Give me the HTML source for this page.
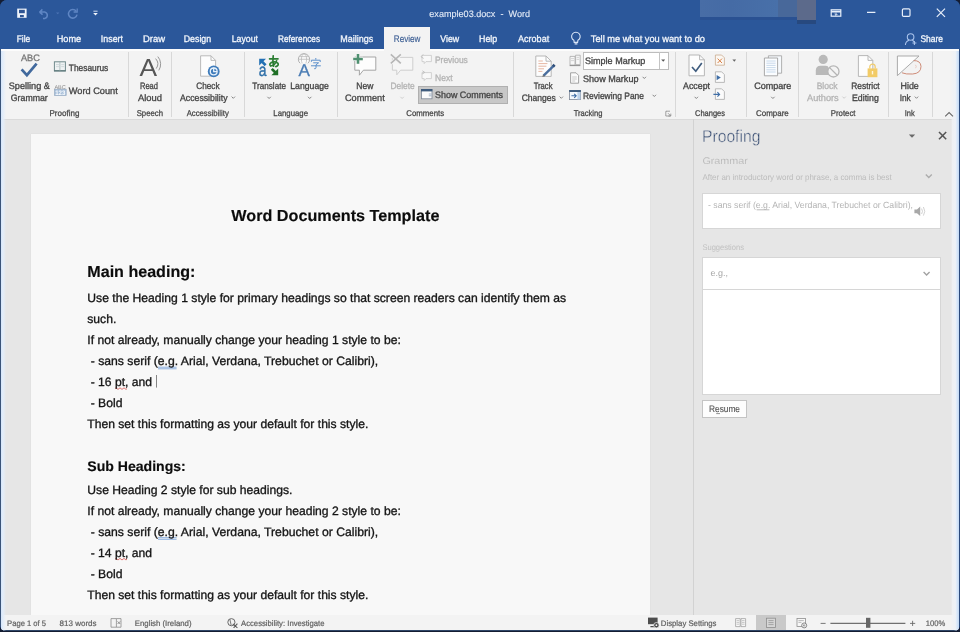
<!DOCTYPE html>
<html><head><meta charset="utf-8"><title>Word</title>
<style>
html,body{margin:0;padding:0;}
body{width:960px;height:632px;overflow:hidden;background:#141d33;font-family:"Liberation Sans",sans-serif;position:relative;}
#win{position:absolute;left:0;top:0;width:960px;height:632px;overflow:hidden;}
#frame{position:absolute;left:0;top:0;width:960px;height:631px;border-radius:7px 7px 6px 6px;background:#2b579a;overflow:hidden;filter:blur(0.45px);}
.abs{position:absolute;}
.t{position:absolute;white-space:pre;line-height:1;transform-origin:0 0;}
.d{color:#1a1a1a;}
.sep{position:absolute;top:52px;height:65px;width:1px;background:#d8d8d8;}
svg{position:absolute;overflow:visible;}
svg text{white-space:pre;}
</style></head><body>
<div id="win"><div id="frame">
<!-- title + tab strip -->
<div class="abs" style="left:0;top:0;width:960px;height:49px;background:#2b579a"></div>
<div class="abs" style="left:700px;top:0;width:116px;height:20px;background:#2a5192"></div>
<div class="abs" style="left:797px;top:0;width:19px;height:23.5px;background:#27497f"></div>
<div class="abs" style="left:700px;top:0;width:78px;height:17px;background:linear-gradient(90deg,#486da6,#456ba5 40%,#4870a9)"></div>
<div class="abs" style="left:778px;top:0;width:19px;height:17px;background:#48689a"></div>
<div class="abs" style="left:797px;top:0;width:19px;height:20px;background:#5c6a8b"></div>

<div class="abs" style="left:384px;top:27px;width:46px;height:23px;background:#f3f3f3"></div>
<!-- ribbon -->
<div class="abs" style="left:1px;top:49px;width:958px;height:71px;background:#f3f3f3"></div>
<div class="abs" style="left:1px;top:119px;width:958px;height:1px;background:#dadada"></div>
<!-- doc area -->
<div class="abs" style="left:1px;top:120px;width:958px;height:495px;background:#e6e6e6"></div>
<div class="abs" style="left:31px;top:134.2px;width:619px;height:481px;background:#f8f8f8;box-shadow:0 0 1px #cfcfcf"></div>
<!-- side panel -->
<div class="abs" style="left:693px;top:119px;width:1px;height:496px;background:#d2d2d2"></div>
<div class="abs" style="left:702px;top:193px;width:239px;height:36px;background:#fff;box-sizing:border-box;border:1px solid #d6d6d6"></div>
<div class="abs" style="left:702px;top:257px;width:239px;height:138px;background:#fff;box-sizing:border-box;border:1px solid #d6d6d6"></div>
<div class="abs" style="left:702px;top:289px;width:239px;height:1px;background:#d6d6d6"></div>
<div class="abs" style="left:701.5px;top:399.5px;width:45px;height:18.5px;background:#fdfdfd;box-sizing:border-box;border:1px solid #c4c4c4"></div>
<!-- status bar -->
<div class="abs" style="left:1px;top:615px;width:958px;height:16px;background:#f3f3f3"></div>
<div class="abs" style="left:756px;top:615px;width:30px;height:16px;background:#c9c9c9"></div>
<!-- window edge glow -->
<div class="abs" style="left:0;top:49px;width:1.2px;height:583px;background:#3a5479"></div>
<div class="abs" style="left:1.2px;top:49px;width:5px;height:582px;background:linear-gradient(90deg,#d6e6fb 0,#e4eefa 40%,rgba(240,243,247,0) 100%)"></div>
<div class="abs" style="left:950.6px;top:49px;width:8.2px;height:582px;background:linear-gradient(90deg,rgba(240,242,245,0) 0,rgba(240,242,245,.85) 18%,#eef2f7 55%,#d9e8fa 75%,#c3d9f4 100%)"></div>
<div class="abs" style="left:958.7px;top:49px;width:1.3px;height:583px;background:#2b4a7c"></div>
<div class="abs" style="left:0;top:629.6px;width:960px;height:2px;background:#2f4668"></div>
<div class="abs" style="left:1px;top:49px;width:383px;height:1.6px;background:#fcfcfc"></div><div class="abs" style="left:430px;top:49px;width:529px;height:1.6px;background:#fcfcfc"></div>
<!-- ribbon details -->
<div class="sep" style="left:128px"></div><div class="sep" style="left:171px"></div><div class="sep" style="left:244px"></div>
<div class="sep" style="left:336.5px"></div><div class="sep" style="left:513px"></div><div class="sep" style="left:675px"></div>
<div class="sep" style="left:746px"></div><div class="sep" style="left:798px"></div><div class="sep" style="left:887.5px"></div><div class="sep" style="left:931.5px"></div>
<div class="abs" style="left:418px;top:86px;width:90px;height:17.6px;background:#c8c8c8;box-sizing:border-box;border:1px solid #b0b0b0"></div>
<div class="abs" style="left:582.5px;top:51.5px;width:86px;height:18px;background:#fff;box-sizing:border-box;border:1px solid #bdbdbd"></div>
<div class="abs" style="left:658.5px;top:52px;width:1px;height:17px;background:#c4c4c4"></div>
<svg style="left:0;top:0" width="960" height="632" viewBox="0 0 960 632" fill="none" stroke-linecap="butt">
<!-- ===== Quick access toolbar ===== -->
<g id="qat">
 <rect x="17.2" y="8.6" width="9.4" height="9.2" fill="#eef3fb"/>
 <rect x="19" y="9.8" width="5.8" height="3.4" fill="#2f5593"/>
 <rect x="20" y="15" width="3.8" height="2.2" fill="#2f5593"/>
 <path d="M39.5 12.2 L42.4 9.4 M39.5 12.2 L42.6 14.6 M39.8 12.1 H45 A3.3 3.3 0 0 1 45 18.4 H43" stroke="#5f86c4" stroke-width="1.5"/>
 <path d="M56 12.4 h3.4 l-1.7 1.8z" fill="#4c74b4"/>
 <path d="M76.2 11.2 A4.3 4.3 0 1 0 77 14.6" stroke="#5f86c4" stroke-width="1.5"/>
 <path d="M77.2 8.4 V12 H73.6" stroke="#5f86c4" stroke-width="1.3"/>
 <path d="M93.4 11.2 h4.2" stroke="#dfe8f6" stroke-width="0.9"/>
 <path d="M93.2 12.9 h4.6 l-2.3 2.6z" fill="#f2f6fc"/>
</g>
<!-- ===== window controls ===== -->
<g stroke="#e8effa" stroke-width="1.2">
 <rect x="831.2" y="9.8" width="9.6" height="6.4" />
 <path d="M831.2 11.6 h9.6" stroke-width="1.6"/>
 <path d="M836 12.6 v2.6 M834.6 14 l1.4 1.4 1.4-1.4" stroke-width="0.9"/>
 <path d="M867 12.4 h8.4"/>
 <rect x="902.4" y="8.8" width="7.6" height="7.6" rx="1.2"/>
 <path d="M936.8 8.6 l8.2 8.2 M945 8.6 l-8.2 8.2"/>
</g>
<!-- lightbulb -->
<g stroke="#d9e5f7" stroke-width="1.1">
 <path d="M573.9 40.3 A4.3 4.3 0 1 1 577.9 40.3 L577.6 42.4 H574.2 Z"/>
 <path d="M574.6 43.8 h2.8" stroke-width="1.3"/>
</g>
<!-- share icon -->
<g stroke="#a9c3ec" stroke-width="1.1">
 <circle cx="910.6" cy="37" r="3.3"/>
 <path d="M905.4 45 A5.4 5.4 0 0 1 909 40.2 M912.3 40.2 Q913.5 40.8 914.2 42"/>
 <path d="M912.4 43 h4 M914.4 41 v4"/>
</g>

<!-- ===== Proofing group ===== -->
<path d="M21.6 69.4 L26.9 75.2 L36.6 63.6" stroke="#41699d" stroke-width="2.7" stroke-linejoin="miter"/>
<!-- thesaurus -->
<g>
 <rect x="54.4" y="61.8" width="11" height="9" fill="#eef2f3" stroke="#708a8c" stroke-width="1"/>
 <path d="M54 70.9 h11.8" stroke="#5d787a" stroke-width="1.3"/>
 <path d="M59.9 62 v8.6" stroke="#9fb2b4" stroke-width="0.8"/>
 <path d="M56 64.6 h3 M56 66.6 h3 M61.2 64.6 h3 M61.2 66.6 h3" stroke="#c3cfd0" stroke-width="0.7"/>
</g>
<!-- word count -->
<g>
 <text x="54.4" y="88.8" font-family="Liberation Sans" font-size="5.6" fill="#8e8e8e" textLength="11.4" lengthAdjust="spacingAndGlyphs" text-rendering="geometricPrecision">ABC</text>
 <rect x="54.4" y="89.2" width="11.8" height="6.4" fill="#a9c0da" stroke="#93a7bf" stroke-width="0.6"/>
 <text x="55.2" y="95.2" font-family="Liberation Sans" font-size="6.4" font-weight="bold" fill="#f6f9fd" textLength="10.2" lengthAdjust="spacingAndGlyphs" text-rendering="geometricPrecision">123</text>
</g>
<!-- ===== Read aloud ===== -->
<text x="139.6" y="76.3" font-family="Liberation Sans" font-size="24.8" fill="#565656" textLength="17.6" lengthAdjust="spacingAndGlyphs">A</text>
<path d="M155.6 58.6 A8 8 0 0 1 156.2 68.6 M157.8 56.6 A11.5 11.5 0 0 1 158.8 70.4" stroke="#8c8c8c" stroke-width="0.9"/>
<!-- ===== Check accessibility ===== -->
<path d="M200.6 55.8 H211 L215.6 60.4 V76.2 H200.6 Z" fill="#fdfdfd" stroke="#b3b3b3" stroke-width="0.9"/>
<path d="M211 55.8 V60.4 H215.6" stroke="#b3b3b3" stroke-width="0.9"/>
<circle cx="213.7" cy="71.4" r="5.9" fill="#3f7cbb"/>
<circle cx="213.7" cy="71.4" r="3.4" stroke="#e6f0fa" stroke-width="1.3"/>
<path d="M213.7 67.6 V71.6 H217.2" stroke="#e6f0fa" stroke-width="1.3"/>
<!-- ===== Translate ===== -->
<g>
 <path d="M259.2 58.8 H266 L259.2 65.6 Z" fill="#2270b4"/>
 <path d="M262 61.6 L265.6 65.2" stroke="#2270b4" stroke-width="2.7"/>
 <text x="258.8" y="75.9" font-family="Liberation Sans" font-size="17.6" fill="#2e6fa8" stroke="#2e6fa8" stroke-width="0.35" textLength="7.8" lengthAdjust="spacingAndGlyphs" text-rendering="geometricPrecision">a</text>
 <g stroke="#2b7d32" stroke-width="1.7" stroke-linecap="round">
  <path d="M269.6 58.8 h8.4"/>
  <path d="M273.2 55.8 Q272.4 61 273.6 66.2"/>
  <path d="M276.6 60.8 Q275 65.6 270.6 66 Q268.8 64.2 271.2 62.6 Q275.4 60.8 278 63.4 Q279 65.6 275.8 66.6"/>
 </g>
 <path d="M278.2 75.3 H271.4 L278.2 68.5 Z" fill="#1f7026"/>
 <path d="M275.4 72.5 L271.8 68.9" stroke="#1f7026" stroke-width="2.7"/>
</g>
<!-- ===== Language ===== -->
<g>
 <circle cx="304" cy="59.3" r="5.6" fill="#fafafa" stroke="#a2a2a2" stroke-width="0.85"/>
 <path d="M298.6 59.3 h10.8 M299.6 56.6 h8.8" stroke="#b4b4b4" stroke-width="0.7"/>
 <ellipse cx="304" cy="59.3" rx="2.6" ry="5.6" stroke="#b4b4b4" stroke-width="0.7"/>
 <rect x="298" y="63.2" width="13" height="2.6" fill="#f3f3f3"/>
 <text x="298.6" y="76.2" font-family="Liberation Sans" font-size="17" fill="#4a7cb4" stroke="#4a7cb4" stroke-width="0.3" textLength="11.4" lengthAdjust="spacingAndGlyphs" text-rendering="geometricPrecision">A</text>
 <g stroke="#5b8fcb" stroke-width="1">
  <path d="M315.8 58 v1.6 M311.4 61.8 v-1.6 h8.8 v1.8"/>
  <path d="M313.2 62.8 h5.4 l-2.6 2 M311 65.8 h9.8 M316 64.8 v3 q0 1.2 -1.8 0.9"/>
 </g>
</g>
<!-- ===== Comments ===== -->
<g>
 <path d="M354.8 57 H375.8 V70.2 H363.4 L359.4 75.2 V70.2 H354.8 Z" fill="#fdfdfd" stroke="#9c9c9c" stroke-width="0.9"/>
 <path d="M353 58.9 h10 M358 53.9 v10" stroke="#f3f3f3" stroke-width="4.2"/>
 <path d="M353.2 58.9 h9.6 M358 54.1 v9.6" stroke="#4f9070" stroke-width="2.5"/>
 <!-- delete -->
 <path d="M392.4 57.4 H412.8 V70.2 H400.6 L396.8 74.8 V70.2 H392.4 Z" fill="#f6f6f6" stroke="#cbcbcb" stroke-width="0.9"/>
 <path d="M390.8 54.4 l10 9 M400.8 54.4 l-10 9" stroke="#f3f3f3" stroke-width="3.4"/>
 <path d="M390.8 54.4 l10 9 M400.8 54.4 l-10 9" stroke="#b5b5b5" stroke-width="1.5"/>
 <!-- previous / next -->
 <path d="M422 55.4 H431.4 V61.6 H426 L424.2 63.6 V61.6 H422 Z" fill="#f8f8f8" stroke="#c8c8c8" stroke-width="0.8"/>
 <path d="M421 56.8 l2.2 -2.4 M421 56.8 l2.6 1.6" stroke="#bdbdbd" stroke-width="0.9"/>
 <path d="M422 72.6 H431.4 V78.6 H426 L424.2 80.6 V78.6 H422 Z" fill="#f8f8f8" stroke="#c8c8c8" stroke-width="0.8"/>
 <path d="M424.8 72.4 l-2.4 -1.6 M424.8 72.4 l-2.6 1.6" stroke="#bdbdbd" stroke-width="0.9"/>
 <!-- show comments icon -->
 <rect x="421.4" y="89.4" width="10.6" height="9.4" fill="#fbfbfb" stroke="#7d8896" stroke-width="0.8"/>
 <rect x="421" y="89" width="11.4" height="2.4" fill="#3f5c7e"/>
 <path d="M428.8 94 h2.8 M428.8 95.8 h2.8" stroke="#8fa3bb" stroke-width="0.8"/>
</g>
<!-- ===== Tracking ===== -->
<g>
 <path d="M535.8 56 H546 L551.2 61.2 V76.4 H535.8 Z" fill="#fdfdfd" stroke="#b0b0b0" stroke-width="0.9"/>
 <path d="M546 56 V61.2 H551.2" stroke="#b0b0b0" stroke-width="0.9"/>
 <path d="M538.4 61 h4.4 M538.4 63.6 h9 M538.4 66.2 h8 M538.4 68.8 h5.6 M538.4 71.4 h4" stroke="#e0a58c" stroke-width="0.8"/>
 <path d="M543.6 75.6 L553.6 65.8" stroke="#4a6e9e" stroke-width="2.4"/>
 <path d="M542.4 76.9 l0.6 -2.4 1.8 1.8z" fill="#6b6b6b"/>
 <path d="M553 66.4 l1.6 -1.6" stroke="#2f4f7a" stroke-width="2.8"/>
 <!-- display for review -->
 <path d="M570 56.4 h5 v8.6 h-5z M575.6 55.2 h4.6 v9.4 h-4.6z" fill="#f8f8f8" stroke="#a9a9a9" stroke-width="0.8"/>
 <path d="M569.6 65.6 h10.8" stroke="#8f8f8f" stroke-width="1"/>
 <path d="M576.6 57.4 h2.6 M576.6 59.4 h2.6 M571 58.6 h3 M571 60.6 h3" stroke="#c4c4c4" stroke-width="0.7"/>
 <!-- show markup -->
 <path d="M570.6 72.8 H576 L578.6 75.4 V83.2 H570.6 Z" fill="#fbfbfb" stroke="#929292" stroke-width="0.85"/>
 <path d="M572.2 77 h4.6 M572.2 79 h4.6 M572.2 81 h3" stroke="#b4b4b4" stroke-width="0.7"/>
 <!-- reviewing pane -->
 <rect x="569.6" y="90.4" width="10.8" height="9.2" fill="#f4f8fc" stroke="#7d8896" stroke-width="0.8"/>
 <rect x="569.2" y="90" width="11.6" height="2" fill="#3f5c7e"/>
 <rect x="577.4" y="92" width="3" height="7.4" fill="#bcd2ea"/>
 <path d="M571.4 95.8 h4.6 M574.2 93.8 l2 2 -2 2" stroke="#3f6ea6" stroke-width="1.1"/>
 <!-- dialog launcher -->
 <path d="M666.4 111.4 h-0.6 v4.6 h4.6 M668 113.2 l2.6 2.6 M670.8 113.6 v2.4 h-2.4" stroke="#8a8a8a" stroke-width="0.8"/>
 <path d="M666 111.2 h4" stroke="#8a8a8a" stroke-width="0.8"/>
</g>
<!-- ===== Changes ===== -->
<g>
 <path d="M689 55 H699.6 L704.4 59.8 V75.8 H689 Z" fill="#fdfdfd" stroke="#b0b0b0" stroke-width="0.9"/>
 <path d="M699.6 55 V59.8 H704.4" stroke="#b0b0b0" stroke-width="0.9"/>
 <path d="M692 67 L695.8 71.2 L701.8 63" stroke="#3f5c7e" stroke-width="1.7"/>
 <!-- reject -->
 <path d="M715.4 55 H721.6 L724.4 57.8 V65.2 H715.4 Z" fill="#fbf7f2" stroke="#c9ab8f" stroke-width="0.8"/>
 <path d="M717.6 58.6 l4.4 4.4 M722 58.6 l-4.4 4.4" stroke="#d9824a" stroke-width="1"/>
 <!-- previous change -->
 <path d="M715.4 71.8 H721.6 L724.4 74.6 V82.4 H715.4 Z" fill="#fbfbfb" stroke="#a9a9a9" stroke-width="0.8"/>
 <path d="M716.6 75 l4.2 2.6 -4.2 2.6z" fill="#3f6ea6"/>
 <!-- next change -->
 <path d="M715.4 88.8 H721.6 L724.4 91.6 V99.4 H715.4 Z" fill="#fbfbfb" stroke="#a9a9a9" stroke-width="0.8"/>
 <path d="M713.4 94.4 h6 M717.4 92.2 l2.2 2.2 -2.2 2.2" stroke="#3f6ea6" stroke-width="1.1"/>
</g>
<!-- ===== Compare ===== -->
<g>
 <path d="M768.4 55.8 H781.6 V73.2 H768.4 Z" fill="#f6f9fc" stroke="#a9a9a9" stroke-width="0.9"/>
 <path d="M764.4 58 H777.6 V75.8 H764.4 Z" fill="#fbfdff" stroke="#a0a0a0" stroke-width="0.9"/>
 <path d="M766.4 61 h9.2 M766.4 63.2 h9.2 M766.4 65.4 h9.2 M766.4 67.6 h9.2 M766.4 69.8 h9.2 M766.4 72 h9.2" stroke="#bcd0e6" stroke-width="0.8"/>
</g>
<!-- ===== Protect ===== -->
<g>
 <circle cx="823.2" cy="59.4" r="4.6" fill="#b9b9b9"/>
 <path d="M815.8 75 V70.6 Q815.8 65.8 820.6 65.8 H825.8 Q828.4 65.8 828.6 68 V75 Z" fill="#b9b9b9"/>
 <circle cx="833.4" cy="71.4" r="5.6" fill="#f3f3f3" stroke="#b5b5b5" stroke-width="1.3"/>
 <path d="M829.6 67.6 l7.6 7.6" stroke="#b5b5b5" stroke-width="1.3"/>
 <!-- restrict editing -->
 <path d="M858.4 55.6 H868 L872.8 60.4 V76.4 H858.4 Z" fill="#fdfdfd" stroke="#b0b0b0" stroke-width="0.9"/>
 <path d="M868 55.6 V60.4 H872.8" stroke="#b0b0b0" stroke-width="0.9"/>
 <path d="M869.8 68.6 V66.8 A2.7 2.7 0 0 1 875.2 66.8 V68.6" stroke="#f0cd72" stroke-width="1.3"/>
 <rect x="867.6" y="68.4" width="9.8" height="8.8" fill="#f2cb66"/>
 <rect x="871.8" y="71" width="1.4" height="3.4" fill="#fff6dc"/>
</g>
<!-- ===== Ink ===== -->
<g>
 <path d="M897.4 56 H919 L897.4 75.6 Z" fill="#fdfdfd" stroke="#a2a2a2" stroke-width="0.9"/>
 <path d="M913.6 60.6 Q920.6 60.4 921 66.4 Q921 73.4 912.6 74 Q905.6 74.4 902 72.8" stroke="#c9806a" stroke-width="0.9"/>
 <path d="M915.4 64.8 q1.6 1.4 0.2 3.4" stroke="#e7c2b6" stroke-width="0.8"/>
</g>
<path d="M945.2 116.4 l3.9 -3.9 3.9 3.9" stroke="#6a6a6a" stroke-width="1.1"/>

<!-- dropdown arrows (ribbon) -->
<g stroke="#7a7a7a" stroke-width="0.9">
 <path d="M231.6 96.6 l1.7 1.7 1.7-1.7"/>
 <path d="M267.4 96.8 l1.7 1.7 1.7-1.7"/>
 <path d="M308 96.8 l1.7 1.7 1.7-1.7"/>
 <path d="M559.6 96.6 l1.7 1.7 1.7-1.7"/>
 <path d="M642.6 76.8 l1.7 1.7 1.7-1.7"/>
 <path d="M652.6 94.8 l1.7 1.7 1.7-1.7"/>
 <path d="M694.6 96.8 l1.7 1.7 1.7-1.7"/>
 <path d="M771.2 96.8 l1.7 1.7 1.7-1.7"/>
 <path d="M914.8 96.6 l1.7 1.7 1.7-1.7"/>
 <path d="M400.4 96.8 l1.7 1.7 1.7-1.7" stroke="#c9c9c9"/>
 <path d="M842.4 96.6 l1.7 1.7 1.7-1.7" stroke="#c9c9c9"/>
</g>
<path d="M661.2 59.6 h4 l-2 2.2z" fill="#555"/>
<path d="M732.4 59.6 h3.8 l-1.9 2.1z" fill="#666"/>

<!-- ===== Side panel icons ===== -->
<path d="M908.8 134.4 h6.4 l-3.2 3.4z" fill="#6a6a6a"/>
<path d="M939 132 l7.2 7.2 M946.2 132 l-7.2 7.2" stroke="#555" stroke-width="1.55"/>
<path d="M756.6 209.8 h12.8" stroke="#a8a8a8" stroke-width="0.8"/>
<path d="M925.8 174.6 l3 3 3-3" stroke="#adadad" stroke-width="1.4"/>
<path d="M923.6 272 l3 3 3-3" stroke="#a2a2a2" stroke-width="1.4"/>
<g>
 <path d="M914.4 209.4 h2.6 l3.2 -2.8 v9.4 l-3.2 -2.8 h-2.6z" fill="#a8a8a8"/>
 <path d="M921.6 208.6 q1.8 2.7 0 5.4 M923.4 207 q2.8 4.3 0 8.6" stroke="#c6c6c6" stroke-width="0.8"/>
</g>
<path d="M716.2 413.6 h3.8" stroke="#666" stroke-width="0.7"/>
<!-- ===== Status bar icons ===== -->
<g stroke="#8a8a8a" stroke-width="0.8">
 <path d="M111 618.6 h5.4 v8.6 h-5.4z"/>
 <path d="M116.4 618.6 h4.6 v8.6 h-4.6"/>
 <path d="M117.6 621.4 l2.6 2.6 M120.2 621.4 l-2.6 2.6" stroke="#7a7a7a"/>
</g>
<g>
 <circle cx="231.4" cy="622.2" r="3.6" stroke="#6a6a6a" stroke-width="1"/>
 <path d="M229.8 619.2 l1.4 6" stroke="#6a6a6a" stroke-width="0.9"/>
 <path d="M232.8 623.8 l4.6 4 M237.4 623.6 l-3.8 4.2" stroke="#5a5a5a" stroke-width="1.1"/>
</g>
<g>
 <rect x="648" y="617.6" width="9.6" height="6.6" fill="#4d4d4d"/>
 <path d="M650.4 626.6 h4.4" stroke="#4d4d4d" stroke-width="1.2"/>
 <circle cx="656.4" cy="625.2" r="2.7" fill="#4d4d4d" stroke="#f3f3f3" stroke-width="0.7"/>
 <circle cx="656.4" cy="625.2" r="0.9" fill="#f3f3f3"/>
</g>
<g stroke="#a2a2a2" stroke-width="0.8">
 <path d="M735.6 618.6 h4.6 v8 h-4.6z M741 618.6 h4.6 v8 h-4.6z" fill="#f8f8f8"/>
 <path d="M736.6 620.6 h2.6 M736.6 622.4 h2.6 M736.6 624.2 h2.6 M742 620.6 h2.6 M742 622.4 h2.6 M742 624.2 h2.6" stroke-width="0.6"/>
</g>
<g stroke="#8e8e8e" stroke-width="0.8">
 <rect x="766.6" y="618.2" width="8.8" height="9.2" fill="#d6d6d6"/>
 <path d="M768.4 620.6 h5.2 M768.4 622.6 h5.2 M768.4 624.6 h5.2" stroke-width="0.7"/>
</g>
<g stroke="#8e8e8e" stroke-width="0.8">
 <rect x="797" y="618.4" width="8.4" height="8" fill="#f8f8f8"/>
 <path d="M798.4 620.6 h5.4 M798.4 622.4 h3" stroke-width="0.6"/>
 <circle cx="804.2" cy="625.4" r="2.5" fill="#f3f3f3" stroke="#6e6e6e"/>
 <path d="M803 625.4 h2.4 M804.2 624 q-1 1.4 0 2.8" stroke="#6e6e6e" stroke-width="0.5"/>
</g>
<path d="M820.6 623.4 h5" stroke="#6a6a6a" stroke-width="0.9"/>
<path d="M830.4 623.4 h75" stroke="#707070" stroke-width="1.1"/>
<rect x="866" y="617.8" width="4.4" height="10" fill="#666"/>
<path d="M910 623.4 h5.2 M912.6 620.8 v5.2" stroke="#6a6a6a" stroke-width="0.9"/>

<!-- ===== Document decorations ===== -->
<!-- grammar double underline under e.g. -->
<g stroke="#5b8fd6" stroke-width="0.7">
 <path d="M158 367.2 h18.6 M158 368.8 h18.6"/>
 <path d="M158 537.7 h18.6 M158 539.3 h18.6"/>
</g>
<!-- red squiggle under pt -->
<g stroke="#d9534f" stroke-width="0.8">
 <path d="M115 388.6 q1 -1.6 2 0 t2 0 t2 0 t2 0 t2 0 t2 0"/>
 <path d="M115 559.2 q1 -1.6 2 0 t2 0 t2 0 t2 0 t2 0 t2 0"/>
</g>
<!-- text caret -->
<path d="M156.5 375 v12.6" stroke="#777" stroke-width="0.9"/>
</svg>

<svg style="left:0;top:0" width="960" height="632" viewBox="0 0 960 632" text-rendering="geometricPrecision" font-family="Liberation Sans, sans-serif" xml:space="preserve">
<text x="429.3" y="17" font-size="9.4" fill="#e6edf8" textLength="100.7" lengthAdjust="spacingAndGlyphs" stroke="#e6edf8" stroke-width="0.1">example03.docx  -  Word</text>
<text x="16.7" y="42" font-size="9.6" fill="#f1f5fb" textLength="13.6" lengthAdjust="spacingAndGlyphs" stroke="#f1f5fb" stroke-width="0.32">File</text>
<text x="56.7" y="42" font-size="9.6" fill="#f1f5fb" textLength="24.5" lengthAdjust="spacingAndGlyphs" stroke="#f1f5fb" stroke-width="0.32">Home</text>
<text x="100.8" y="42" font-size="9.6" fill="#f1f5fb" textLength="22.2" lengthAdjust="spacingAndGlyphs" stroke="#f1f5fb" stroke-width="0.32">Insert</text>
<text x="143.0" y="42" font-size="9.6" fill="#f1f5fb" textLength="22.0" lengthAdjust="spacingAndGlyphs" stroke="#f1f5fb" stroke-width="0.32">Draw</text>
<text x="183.7" y="42" font-size="9.6" fill="#f1f5fb" textLength="27.5" lengthAdjust="spacingAndGlyphs" stroke="#f1f5fb" stroke-width="0.32">Design</text>
<text x="231.7" y="42" font-size="9.6" fill="#f1f5fb" textLength="26.3" lengthAdjust="spacingAndGlyphs" stroke="#f1f5fb" stroke-width="0.32">Layout</text>
<text x="278.0" y="42" font-size="9.6" fill="#f1f5fb" textLength="42.0" lengthAdjust="spacingAndGlyphs" stroke="#f1f5fb" stroke-width="0.32">References</text>
<text x="340.3" y="42" font-size="9.6" fill="#f1f5fb" textLength="33.0" lengthAdjust="spacingAndGlyphs" stroke="#f1f5fb" stroke-width="0.32">Mailings</text>
<text x="440.3" y="42" font-size="9.6" fill="#f1f5fb" textLength="18.9" lengthAdjust="spacingAndGlyphs" stroke="#f1f5fb" stroke-width="0.32">View</text>
<text x="479.0" y="42" font-size="9.6" fill="#f1f5fb" textLength="18.2" lengthAdjust="spacingAndGlyphs" stroke="#f1f5fb" stroke-width="0.32">Help</text>
<text x="518.0" y="42" font-size="9.6" fill="#f1f5fb" textLength="31.2" lengthAdjust="spacingAndGlyphs" stroke="#f1f5fb" stroke-width="0.32">Acrobat</text>
<text x="590.8" y="42" font-size="9.6" fill="#f1f5fb" textLength="114.2" lengthAdjust="spacingAndGlyphs" stroke="#f1f5fb" stroke-width="0.32">Tell me what you want to do</text>
<text x="920.5" y="42" font-size="9.6" fill="#f1f5fb" textLength="22.5" lengthAdjust="spacingAndGlyphs" stroke="#f1f5fb" stroke-width="0.32">Share</text>
<text x="393.8" y="42" font-size="9.6" fill="#3d5f94" textLength="26.7" lengthAdjust="spacingAndGlyphs" stroke="#3d5f94" stroke-width="0.15">Review</text>
<text x="21.0" y="61" font-size="9.4" fill="#777" textLength="18.8" lengthAdjust="spacingAndGlyphs" stroke="#777" stroke-width="0.32">ABC</text>
<text x="8.7" y="89" font-size="9.4" fill="#444" textLength="41.3" lengthAdjust="spacingAndGlyphs" stroke="#444" stroke-width="0.32">Spelling &amp;</text>
<text x="10.8" y="101" font-size="9.4" fill="#444" textLength="37.0" lengthAdjust="spacingAndGlyphs" stroke="#444" stroke-width="0.32">Grammar</text>
<text x="68.8" y="71" font-size="9.4" fill="#444" textLength="39.5" lengthAdjust="spacingAndGlyphs" stroke="#444" stroke-width="0.32">Thesaurus</text>
<text x="68.8" y="94" font-size="9.4" fill="#444" textLength="49.0" lengthAdjust="spacingAndGlyphs" stroke="#444" stroke-width="0.32">Word Count</text>
<text x="49.5" y="116" font-size="8.4" fill="#444" textLength="30.0" lengthAdjust="spacingAndGlyphs" stroke="#444" stroke-width="0.25">Proofing</text>
<text x="140.0" y="89" font-size="9.4" fill="#444" textLength="18.0" lengthAdjust="spacingAndGlyphs" stroke="#444" stroke-width="0.32">Read</text>
<text x="138.0" y="101" font-size="9.4" fill="#444" textLength="24.0" lengthAdjust="spacingAndGlyphs" stroke="#444" stroke-width="0.32">Aloud</text>
<text x="136.7" y="116" font-size="8.4" fill="#444" textLength="26.3" lengthAdjust="spacingAndGlyphs" stroke="#444" stroke-width="0.25">Speech</text>
<text x="196.3" y="89" font-size="9.4" fill="#444" textLength="23.2" lengthAdjust="spacingAndGlyphs" stroke="#444" stroke-width="0.32">Check</text>
<text x="180.0" y="101" font-size="9.4" fill="#444" textLength="47.5" lengthAdjust="spacingAndGlyphs" stroke="#444" stroke-width="0.32">Accessibility</text>
<text x="186.7" y="116" font-size="8.4" fill="#444" textLength="42.1" lengthAdjust="spacingAndGlyphs" stroke="#444" stroke-width="0.25">Accessibility</text>
<text x="252.3" y="89" font-size="9.4" fill="#444" textLength="33.7" lengthAdjust="spacingAndGlyphs" stroke="#444" stroke-width="0.32">Translate</text>
<text x="290.3" y="89" font-size="9.4" fill="#444" textLength="38.6" lengthAdjust="spacingAndGlyphs" stroke="#444" stroke-width="0.32">Language</text>
<text x="273.3" y="116" font-size="8.4" fill="#444" textLength="34.7" lengthAdjust="spacingAndGlyphs" stroke="#444" stroke-width="0.25">Language</text>
<text x="356.3" y="89" font-size="9.4" fill="#444" textLength="17.0" lengthAdjust="spacingAndGlyphs" stroke="#444" stroke-width="0.32">New</text>
<text x="345.0" y="101" font-size="9.4" fill="#444" textLength="39.7" lengthAdjust="spacingAndGlyphs" stroke="#444" stroke-width="0.32">Comment</text>
<text x="390.5" y="89" font-size="9.4" fill="#b4b4b4" textLength="24.2" lengthAdjust="spacingAndGlyphs" stroke="#b4b4b4" stroke-width="0.32">Delete</text>
<text x="435.0" y="63" font-size="9.4" fill="#b4b4b4" textLength="32.8" lengthAdjust="spacingAndGlyphs" stroke="#b4b4b4" stroke-width="0.32">Previous</text>
<text x="435.0" y="81" font-size="9.4" fill="#b4b4b4" textLength="17.5" lengthAdjust="spacingAndGlyphs" stroke="#b4b4b4" stroke-width="0.32">Next</text>
<text x="435.0" y="98" font-size="9.4" fill="#444" textLength="68.0" lengthAdjust="spacingAndGlyphs" stroke="#444" stroke-width="0.32">Show Comments</text>
<text x="406.3" y="116" font-size="8.4" fill="#444" textLength="37.9" lengthAdjust="spacingAndGlyphs" stroke="#444" stroke-width="0.25">Comments</text>
<text x="533.7" y="89" font-size="9.4" fill="#444" textLength="18.8" lengthAdjust="spacingAndGlyphs" stroke="#444" stroke-width="0.32">Track</text>
<text x="521.7" y="101" font-size="9.4" fill="#444" textLength="34.1" lengthAdjust="spacingAndGlyphs" stroke="#444" stroke-width="0.32">Changes</text>
<text x="585.0" y="64" font-size="9.4" fill="#444" textLength="60.3" lengthAdjust="spacingAndGlyphs" stroke="#444" stroke-width="0.32">Simple Markup</text>
<text x="583.0" y="82" font-size="9.4" fill="#444" textLength="55.5" lengthAdjust="spacingAndGlyphs" stroke="#444" stroke-width="0.32">Show Markup</text>
<text x="583.0" y="99" font-size="9.4" fill="#444" textLength="61.0" lengthAdjust="spacingAndGlyphs" stroke="#444" stroke-width="0.32">Reviewing Pane</text>
<text x="573.7" y="116" font-size="8.4" fill="#444" textLength="28.8" lengthAdjust="spacingAndGlyphs" stroke="#444" stroke-width="0.25">Tracking</text>
<text x="683.0" y="89" font-size="9.4" fill="#444" textLength="27.0" lengthAdjust="spacingAndGlyphs" stroke="#444" stroke-width="0.32">Accept</text>
<text x="695.0" y="116" font-size="8.4" fill="#444" textLength="30.0" lengthAdjust="spacingAndGlyphs" stroke="#444" stroke-width="0.25">Changes</text>
<text x="754.2" y="89" font-size="9.4" fill="#444" textLength="37.1" lengthAdjust="spacingAndGlyphs" stroke="#444" stroke-width="0.32">Compare</text>
<text x="756.0" y="116" font-size="8.4" fill="#444" textLength="32.8" lengthAdjust="spacingAndGlyphs" stroke="#444" stroke-width="0.25">Compare</text>
<text x="816.7" y="89" font-size="9.4" fill="#b4b4b4" textLength="20.8" lengthAdjust="spacingAndGlyphs" stroke="#b4b4b4" stroke-width="0.32">Block</text>
<text x="807.0" y="101" font-size="9.4" fill="#b4b4b4" textLength="31.7" lengthAdjust="spacingAndGlyphs" stroke="#b4b4b4" stroke-width="0.32">Authors</text>
<text x="851.3" y="89" font-size="9.4" fill="#444" textLength="28.4" lengthAdjust="spacingAndGlyphs" stroke="#444" stroke-width="0.32">Restrict</text>
<text x="852.0" y="101" font-size="9.4" fill="#444" textLength="26.8" lengthAdjust="spacingAndGlyphs" stroke="#444" stroke-width="0.32">Editing</text>
<text x="830.8" y="116" font-size="8.4" fill="#444" textLength="24.7" lengthAdjust="spacingAndGlyphs" stroke="#444" stroke-width="0.25">Protect</text>
<text x="900.5" y="89" font-size="9.4" fill="#444" textLength="18.3" lengthAdjust="spacingAndGlyphs" stroke="#444" stroke-width="0.32">Hide</text>
<text x="899.7" y="101" font-size="9.4" fill="#444" textLength="11.1" lengthAdjust="spacingAndGlyphs" stroke="#444" stroke-width="0.32">Ink</text>
<text x="904.7" y="116" font-size="8.4" fill="#444" textLength="10.0" lengthAdjust="spacingAndGlyphs" stroke="#444" stroke-width="0.25">Ink</text>
<text x="702.0" y="142" font-size="17.2" fill="#33496f" textLength="58.4" lengthAdjust="spacingAndGlyphs" stroke="#e6e6e6" stroke-width="0.42">Proofing</text>
<text x="702.4" y="164" font-size="9.7" fill="#adadad" textLength="45.5" lengthAdjust="spacingAndGlyphs" stroke="#e6e6e6" stroke-width="0.2">Grammar</text>
<text x="702.4" y="180" font-size="8.4" fill="#bcbcbc" textLength="189.3" lengthAdjust="spacingAndGlyphs">After an introductory word or phrase, a comma is best</text>
<text x="708.0" y="208" font-size="9" fill="#b4b4b4" textLength="205.0" lengthAdjust="spacingAndGlyphs">- sans serif (e.g. Arial, Verdana, Trebuchet or Calibri),</text>
<text x="702.4" y="250" font-size="8.2" fill="#c0c0c0" textLength="41.6" lengthAdjust="spacingAndGlyphs">Suggestions</text>
<text x="710.5" y="276" font-size="9" fill="#a8a8a8" textLength="17.5" lengthAdjust="spacingAndGlyphs">e.g.,</text>
<text x="709.0" y="412" font-size="9.4" fill="#505050" textLength="31.0" lengthAdjust="spacingAndGlyphs" stroke="#505050" stroke-width="0.1">Resume</text>
<text x="7.1" y="626" font-size="8" fill="#606060" textLength="38.9" lengthAdjust="spacingAndGlyphs" stroke="#606060" stroke-width="0.2">Page 1 of 5</text>
<text x="59.6" y="626" font-size="8" fill="#606060" textLength="36.9" lengthAdjust="spacingAndGlyphs" stroke="#606060" stroke-width="0.2">813 words</text>
<text x="134.8" y="626" font-size="8" fill="#606060" textLength="56.7" lengthAdjust="spacingAndGlyphs" stroke="#606060" stroke-width="0.2">English (Ireland)</text>
<text x="241.0" y="626" font-size="8" fill="#606060" textLength="83.5" lengthAdjust="spacingAndGlyphs" stroke="#606060" stroke-width="0.2">Accessibility: Investigate</text>
<text x="660.8" y="626" font-size="8" fill="#606060" textLength="55.7" lengthAdjust="spacingAndGlyphs" stroke="#606060" stroke-width="0.2">Display Settings</text>
<text x="925.7" y="626" font-size="8" fill="#606060" textLength="19.5" lengthAdjust="spacingAndGlyphs" stroke="#606060" stroke-width="0.2">100%</text>
<text x="231.3" y="221" font-size="16" fill="#0c0c0c" textLength="208.1" lengthAdjust="spacingAndGlyphs" font-weight="bold" stroke="#0c0c0c" stroke-width="0.15">Word Documents Template</text>
<text x="87.3" y="277" font-size="16" fill="#0c0c0c" textLength="108.1" lengthAdjust="spacingAndGlyphs" font-weight="bold" stroke="#0c0c0c" stroke-width="0.15">Main heading:</text>
<text x="87.3" y="302" font-size="12.15" fill="#141414" textLength="478.9" lengthAdjust="spacingAndGlyphs" stroke="#141414" stroke-width="0.32">Use the Heading 1 style for primary headings so that screen readers can identify them as</text>
<text x="87.3" y="323" font-size="12.15" fill="#141414" stroke="#141414" stroke-width="0.32">such.</text>
<text x="87.3" y="344" font-size="12.15" fill="#141414" textLength="313.5" lengthAdjust="spacingAndGlyphs" stroke="#141414" stroke-width="0.32">If not already, manually change your heading 1 style to be:</text>
<text x="87.3" y="365" font-size="12.15" fill="#141414" textLength="290.9" lengthAdjust="spacingAndGlyphs" stroke="#141414" stroke-width="0.32"> - sans serif (e.g. Arial, Verdana, Trebuchet or Calibri),</text>
<text x="87.3" y="386" font-size="12.15" fill="#141414" stroke="#141414" stroke-width="0.32"> - 16 pt, and</text>
<text x="87.3" y="407" font-size="12.15" fill="#141414" stroke="#141414" stroke-width="0.32"> - Bold</text>
<text x="87.3" y="428" font-size="12.15" fill="#141414" textLength="281.0" lengthAdjust="spacingAndGlyphs" stroke="#141414" stroke-width="0.32">Then set this formatting as your default for this style.</text>
<text x="87.3" y="471" font-size="14" fill="#0c0c0c" textLength="98.5" lengthAdjust="spacingAndGlyphs" font-weight="bold" stroke="#0c0c0c" stroke-width="0.15">Sub Headings:</text>
<text x="87.3" y="494" font-size="12.15" fill="#141414" stroke="#141414" stroke-width="0.32">Use Heading 2 style for sub headings.</text>
<text x="87.3" y="515" font-size="12.15" fill="#141414" textLength="313.5" lengthAdjust="spacingAndGlyphs" stroke="#141414" stroke-width="0.32">If not already, manually change your heading 2 style to be:</text>
<text x="87.3" y="536" font-size="12.15" fill="#141414" textLength="290.9" lengthAdjust="spacingAndGlyphs" stroke="#141414" stroke-width="0.32"> - sans serif (e.g. Arial, Verdana, Trebuchet or Calibri),</text>
<text x="87.3" y="557" font-size="12.15" fill="#141414" stroke="#141414" stroke-width="0.32"> - 14 pt, and</text>
<text x="87.3" y="578" font-size="12.15" fill="#141414" stroke="#141414" stroke-width="0.32"> - Bold</text>
<text x="87.3" y="599" font-size="12.15" fill="#141414" textLength="281.0" lengthAdjust="spacingAndGlyphs" stroke="#141414" stroke-width="0.32">Then set this formatting as your default for this style.</text>
</svg>

</div></div>
</body></html>
